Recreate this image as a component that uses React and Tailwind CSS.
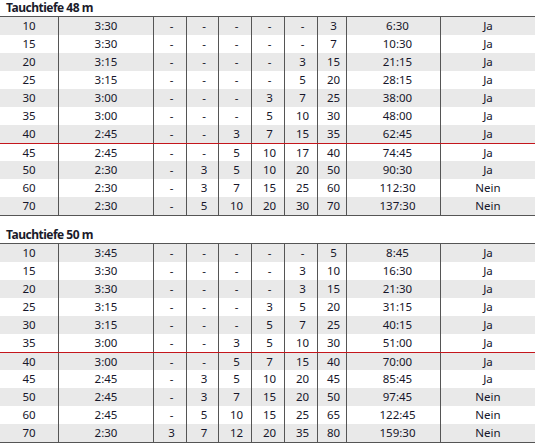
import React from "react";

// Dekompressionstabellen für zwei Tauchtiefen
const tables = [
  {
    title: "Tauchtiefe 48 m",
    redAfter: 7,
    rows: [
      ["10", "3:30", "-", "-", "-", "-", "-", "3", "6:30", "Ja"],
      ["15", "3:30", "-", "-", "-", "-", "-", "7", "10:30", "Ja"],
      ["20", "3:15", "-", "-", "-", "-", "3", "15", "21:15", "Ja"],
      ["25", "3:15", "-", "-", "-", "-", "5", "20", "28:15", "Ja"],
      ["30", "3:00", "-", "-", "-", "3", "7", "25", "38:00", "Ja"],
      ["35", "3:00", "-", "-", "-", "5", "10", "30", "48:00", "Ja"],
      ["40", "2:45", "-", "-", "3", "7", "15", "35", "62:45", "Ja"],
      ["45", "2:45", "-", "-", "5", "10", "17", "40", "74:45", "Ja"],
      ["50", "2:30", "-", "3", "5", "10", "20", "50", "90:30", "Ja"],
      ["60", "2:30", "-", "3", "7", "15", "25", "60", "112:30", "Nein"],
      ["70", "2:30", "-", "5", "10", "20", "30", "70", "137:30", "Nein"],
    ],
  },
  {
    title: "Tauchtiefe 50 m",
    redAfter: 6,
    rows: [
      ["10", "3:45", "-", "-", "-", "-", "-", "5", "8:45", "Ja"],
      ["15", "3:30", "-", "-", "-", "-", "3", "10", "16:30", "Ja"],
      ["20", "3:30", "-", "-", "-", "-", "3", "15", "21:30", "Ja"],
      ["25", "3:15", "-", "-", "-", "3", "5", "20", "31:15", "Ja"],
      ["30", "3:15", "-", "-", "-", "5", "7", "25", "40:15", "Ja"],
      ["35", "3:00", "-", "-", "3", "5", "10", "30", "51:00", "Ja"],
      ["40", "3:00", "-", "-", "5", "7", "15", "40", "70:00", "Ja"],
      ["45", "2:45", "-", "3", "5", "10", "20", "45", "85:45", "Ja"],
      ["50", "2:45", "-", "3", "7", "15", "20", "50", "97:45", "Nein"],
      ["60", "2:45", "-", "5", "10", "15", "25", "65", "122:45", "Nein"],
      ["70", "2:30", "3", "7", "12", "20", "35", "80", "159:30", "Nein"],
    ],
  },
];

const Row = ({ cells, striped, red }) => (
  <div
    className={`grid h-[18px] grid-cols-[58px_95px_33px_32px_33px_33px_33px_29px_94px_1fr] ${
      striped ? "bg-[#e9e9e9]" : "bg-white"
    } ${red ? "border-t border-[#c4161c]" : ""}`}
  >
    {cells.map((c, i) => (
      <div
        key={i}
        className={`flex items-center justify-center ${i > 0 ? "border-l border-[#555]" : ""} ${
          i === 8 ? "pl-[8px]" : ""
        } ${i >= 2 && i <= 7 ? "pl-[3px]" : ""}`}
      >
        {c}
      </div>
    ))}
  </div>
);

const DiveTable = ({ title, rows, redAfter }) => (
  <div>
    <div className="h-[16px] pl-[6px] pt-[1px] text-[12px] font-bold leading-[13px] tracking-[-0.5px] text-[#1a1a2a]">
      {title}
    </div>
    <div className="border-y border-[#555]">
      {rows.map((r, i) => (
        <Row key={r[0]} cells={r} striped={i % 2 === 0} red={i === redAfter} />
      ))}
    </div>
  </div>
);

export default function App() {
  return (
    <div
      className="w-[535px] h-[444px] overflow-hidden bg-white text-[11.5px] leading-none text-[#16162a]"
      style={{ fontFamily: '"Noto Sans", "Open Sans", sans-serif' }}
    >
      <DiveTable {...tables[0]} />
      <div className="h-[11px]" />
      <DiveTable {...tables[1]} />
    </div>
  );
}
